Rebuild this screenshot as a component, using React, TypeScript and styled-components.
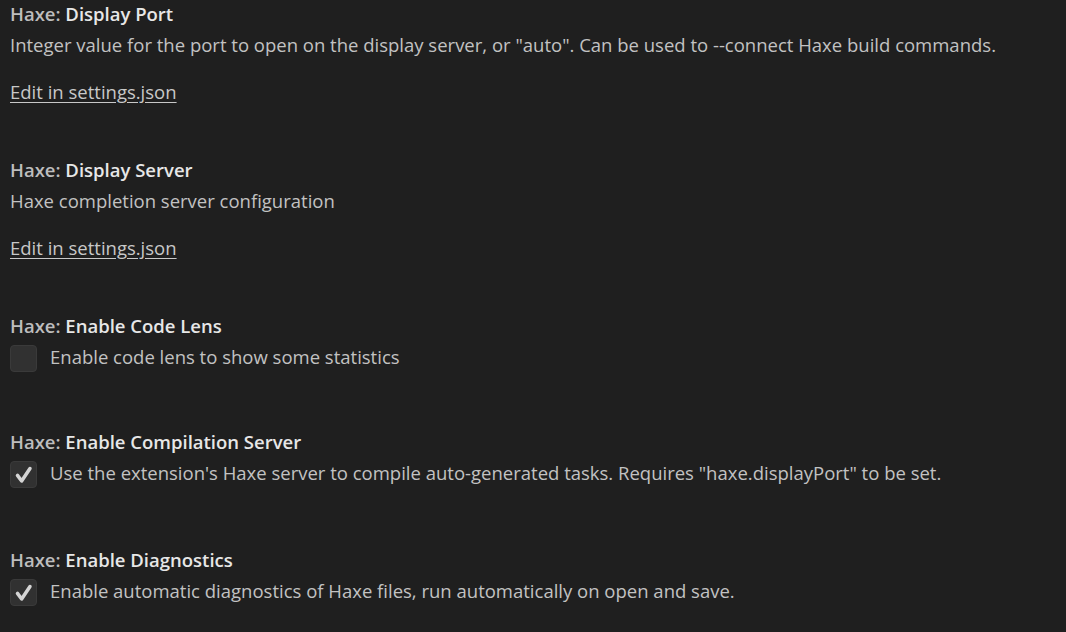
import React from "react";
import styled, { createGlobalStyle } from "styled-components";

const Global = createGlobalStyle`
  html, body { margin: 0; padding: 0; background: #1f1f1f; }
  body { font-family: "Open Sans", "Noto Sans", sans-serif; }
`;

const Page = styled.div`
  width: 1066px;
  height: 632px;
  background: #1f1f1f;
  box-sizing: border-box;
  padding: 2px 0 0 10px;
  overflow: hidden;
  color: #cccccc;
  font-size: 18.5px;
`;

const Setting = styled.section<{ $gap: number }>`
  display: flex;
  flex-direction: column;
  margin-bottom: ${(p) => p.$gap}px;
`;

const Title = styled.div`
  line-height: 24px;
  height: 24px;
  white-space: nowrap;
  font-weight: 600;
`;

const Category = styled.span`
  color: #bdbdbd;
`;

const Label = styled.span`
  color: #e7e7e7;
  font-weight: 600;
`;

const Description = styled.div`
  margin-top: 7px;
  line-height: 24px;
  height: 24px;
  white-space: nowrap;
  color: #c2c2c2;
`;

const Link = styled.a`
  margin-top: 23px;
  line-height: 24px;
  height: 24px;
  color: #c8c8c8;
  text-decoration: underline;
  text-underline-offset: 3px;
  align-self: flex-start;
  cursor: pointer;
`;

const CheckRow = styled.label`
  margin-top: 7px;
  display: flex;
  align-items: center;
  gap: 13px;
  height: 27px;
  white-space: nowrap;
  color: #c2c2c2;
  line-height: 24px;
`;

const CheckText = styled.span`
  padding-bottom: 3px;
`;

const Box = styled.span`
  width: 27px;
  height: 27px;
  box-sizing: border-box;
  border: 1px solid #3a3a3a;
  border-radius: 4px;
  background: #313131;
  display: flex;
  align-items: center;
  justify-content: center;
  flex-shrink: 0;
`;

const Check = () => (
  <svg width="27" height="27" viewBox="0 0 27 27">
    <path
      d="M7 14.5 L11.5 20.5 L20.5 7"
      fill="none"
      stroke="#d4d4d4"
      strokeWidth="3.8"
      strokeLinecap="round"
      strokeLinejoin="round"
    />
  </svg>
);

type Item =
  | { kind: "text"; label: string; desc: string }
  | { kind: "check"; label: string; desc: string; checked: boolean };

const items: Item[] = [
  {
    kind: "text",
    label: "Display Port",
    desc: 'Integer value for the port to open on the display server, or "auto". Can be used to --connect Haxe build commands.',
  },
  { kind: "text", label: "Display Server", desc: "Haxe completion server configuration" },
  { kind: "check", label: "Enable Code Lens", desc: "Enable code lens to show some statistics", checked: false },
  {
    kind: "check",
    label: "Enable Compilation Server",
    desc: 'Use the extension\'s Haxe server to compile auto-generated tasks. Requires "haxe.displayPort" to be set.',
    checked: true,
  },
  {
    kind: "check",
    label: "Enable Diagnostics",
    desc: "Enable automatic diagnostics of Haxe files, run automatically on open and save.",
    checked: true,
  },
];

export default function App() {
  return (
    <>
      <Global />
      <Page>
        {items.map((it, i) => (
          <Setting key={i} $gap={it.kind === "text" ? 54 : i === 3 ? 60 : 58}>
            <Title>
              <Category>Haxe: </Category>
              <Label>{it.label}</Label>
            </Title>
            {it.kind === "text" ? (
              <>
                <Description>{it.desc}</Description>
                <Link>Edit in settings.json</Link>
              </>
            ) : (
              <CheckRow>
                <Box>{it.checked && <Check />}</Box>
                <CheckText>{it.desc}</CheckText>
              </CheckRow>
            )}
          </Setting>
        ))}
      </Page>
    </>
  );
}
